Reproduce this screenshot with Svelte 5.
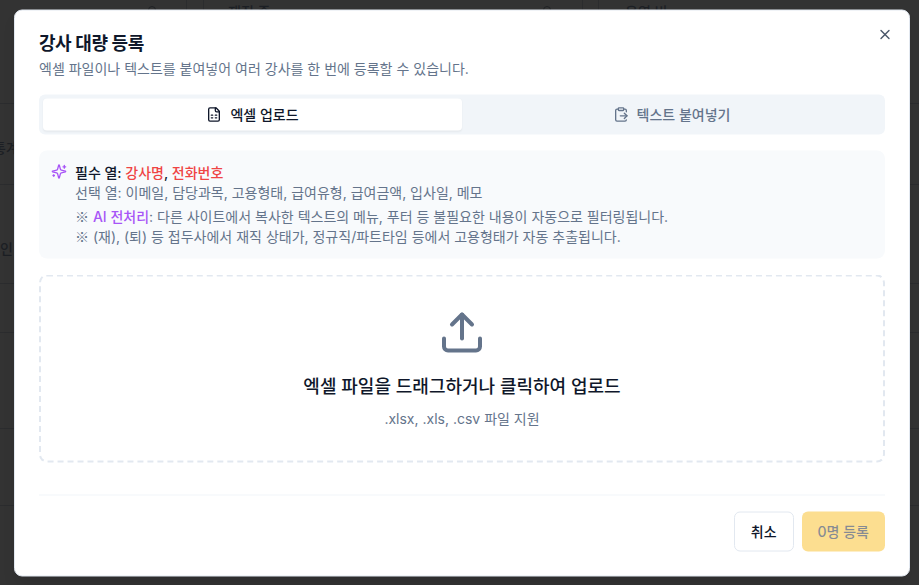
<script>
  const rowsLeft = [103, 184, 283, 332, 428, 505];
</script>

<div class="page">
  <div class="bg">
    <span class="bg-text t1">재직 중</span>
    <span class="bg-text t2">운영 비</span>
    <span class="bg-text t3">통계</span>
    <span class="bg-text t4">인</span>
    <i class="dot d1"></i><i class="dot d2"></i>
    <i class="v v1"></i><i class="v v2"></i><i class="v v3"></i><i class="v v4"></i>
    {#each rowsLeft as y}
      <i class="h" style="top:{y}px"></i>
    {/each}
  </div>

  <div class="modal" role="dialog">
    <button class="close" aria-label="닫기">
      <svg width="16" height="16" viewBox="0 0 24 24" fill="none" stroke="currentColor" stroke-width="2" stroke-linecap="round" stroke-linejoin="round"><path d="M18 6 6 18"/><path d="m6 6 12 12"/></svg>
    </button>

    <header class="head">
      <h2>강사 대량 등록</h2>
      <p>엑셀 파일이나 텍스트를 붙여넣어 여러 강사를 한 번에 등록할 수 있습니다.</p>
    </header>

    <div class="tabs">
      <button class="tab active">
        <svg width="16" height="16" viewBox="0 0 24 24" fill="none" stroke="currentColor" stroke-width="2" stroke-linecap="round" stroke-linejoin="round"><path d="M15 2H6a2 2 0 0 0-2 2v16a2 2 0 0 0 2 2h12a2 2 0 0 0 2-2V7Z"/><path d="M14 2v4a2 2 0 0 0 2 2h4"/><path d="M8 13h2"/><path d="M14 13h2"/><path d="M8 17h2"/><path d="M14 17h2"/></svg>
        엑셀 업로드
      </button>
      <button class="tab">
        <svg width="16" height="16" viewBox="0 0 24 24" fill="none" stroke="currentColor" stroke-width="2" stroke-linecap="round" stroke-linejoin="round"><path d="M15 2H9a1 1 0 0 0-1 1v2c0 .6.4 1 1 1h6c.6 0 1-.4 1-1V3c0-.6-.4-1-1-1Z"/><path d="M8 4H6a2 2 0 0 0-2 2v14a2 2 0 0 0 2 2h12a2 2 0 0 0 2-2M16 4h2a2 2 0 0 1 2 2v2M11 14h10"/><path d="m17 10 4 4-4 4"/></svg>
        텍스트 붙여넣기
      </button>
    </div>

    <div class="info">
      <svg class="spark" width="16" height="16" viewBox="0 0 24 24" fill="none" stroke="currentColor" stroke-width="2" stroke-linecap="round" stroke-linejoin="round"><path d="M9.937 15.5A2 2 0 0 0 8.5 14.063l-6.135-1.582a.5.5 0 0 1 0-.962L8.5 9.936A2 2 0 0 0 9.937 8.5l1.582-6.135a.5.5 0 0 1 .963 0L14.063 8.5A2 2 0 0 0 15.5 9.937l6.135 1.581a.5.5 0 0 1 0 .964L15.5 14.063a2 2 0 0 0-1.437 1.437l-1.582 6.135a.5.5 0 0 1-.963 0z"/><path d="M20 3v4"/><path d="M22 5h-4"/><path d="M4 17v2"/><path d="M5 18H3"/></svg>
      <div class="info-body">
        <p class="req">필수 열: <span class="red">강사명</span>, <span class="red">전화번호</span></p>
        <p class="muted">선택 열: 이메일, 담당과목, 고용형태, 급여유형, 급여금액, 입사일, 메모</p>
        <div class="notes">
          <p><span class="mark">※</span> <strong>AI 전처리</strong>: 다른 사이트에서 복사한 텍스트의 메뉴, 푸터 등 불필요한 내용이 자동으로 필터링됩니다.</p>
          <p><span class="mark">※</span> (재), (퇴) 등 접두사에서 재직 상태가, 정규직/파트타임 등에서 고용형태가 자동 추출됩니다.</p>
        </div>
      </div>
    </div>

    <div class="drop">
      <svg class="up" width="48" height="48" viewBox="0 0 24 24" fill="none" stroke="currentColor" stroke-width="2" stroke-linecap="round" stroke-linejoin="round"><path d="M21 15v4a2 2 0 0 1-2 2H5a2 2 0 0 1-2-2v-4"/><polyline points="17 8 12 3 7 8"/><line x1="12" x2="12" y1="3" y2="15"/></svg>
      <p class="drop-title">엑셀 파일을 드래그하거나 클릭하여 업로드</p>
      <p class="drop-sub">.xlsx, .xls, .csv 파일 지원</p>
    </div>

    <footer class="foot">
      <button class="btn cancel">취소</button>
      <button class="btn submit" disabled>0명 등록</button>
    </footer>
  </div>
</div>

<style>
  :global(body) {
    margin: 0;
    background: #333333;
    font-family: Inter, "Noto Sans CJK KR", sans-serif;
  }
  * { box-sizing: border-box; }
  p, h2 { margin: 0; }

  .page {
    position: relative;
    width: 919px;
    height: 585px;
    overflow: hidden;
    background: #333333;
  }
  .bg { position: absolute; inset: 0; }
  .bg-text { position: absolute; color: #1c1f24; font-size: 14px; line-height: 20px; white-space: nowrap; font-weight: 500; }
  .t1 { left: 228px; top: 2px; }
  .t2 { left: 625px; top: 2px; }
  .t3 { left: -7px; top: 138px; }
  .t4 { left: 0; top: 239px; }
  .dot { position: absolute; top: 6px; width: 8px; height: 8px; border: 1px solid #1f2124; border-radius: 50%; }
  .d1 { left: 148px; } .d2 { left: 543px; }
  .v, .h { position: absolute; background: #2b2c2e; }
  .v { top: 0; height: 10px; width: 1px; }
  .v1 { left: 186px; } .v2 { left: 203px; } .v3 { left: 582px; } .v4 { left: 598px; }
  .h { left: 0; right: 0; height: 1px; }

  .modal {
    position: absolute;
    left: 14px;
    top: 10px;
    width: 896px;
    height: 566.5px;
    transform: translateY(-0.5px);
    background: #fff;
    border: 1px solid #e2e8f0;
    border-radius: 8px;
    padding: 24px;
    display: flex;
    flex-direction: column;
    box-shadow: 0 10px 15px -3px rgba(0,0,0,.1);
  }
  .close {
    position: absolute;
    right: 16px;
    top: 16px;
    padding: 0;
    width: 16px;
    height: 16px;
    border: 0;
    background: none;
    color: #475569;
    display: flex;
  }
  .head { display: flex; flex-direction: column; gap: 6px; margin-bottom: 16px; }
  h2 { font-size: 18px; line-height: 18px; font-weight: 600; color: #0f172a; letter-spacing: -.45px; }
  .head p { font-size: 14px; line-height: 20px; color: #64748b; }

  .tabs {
    display: grid;
    grid-template-columns: 1fr 1fr;
    height: 40px;
    padding: 4px;
    background: #f1f5f9;
    border-radius: 6px;
    margin-bottom: 16px;
  }
  .tab {
    display: flex;
    align-items: center;
    justify-content: center;
    gap: 8px;
    border: 0;
    background: none;
    border-radius: 4px;
    font: 500 14px/20px Inter, "Noto Sans CJK KR", sans-serif;
    color: #64748b;
  }
  .tab.active {
    background: #fff;
    color: #0f172a;
    box-shadow: 0 1px 2px rgba(0,0,0,.05);
  }

  .info {
    display: flex;
    gap: 8px;
    padding: 12px;
    background: #f8fafc;
    border-radius: 8px;
    font-size: 14px;
    line-height: 20px;
    color: #64748b;
    margin-bottom: 16px;
  }
  .spark { color: #a855f7; flex: none; margin-top: 1px; }
  .req { color: #0f172a; font-weight: 500; }
  .red { color: #ef4444; }
  .notes { margin-top: 4px; }
  .mark { font-family: "Noto Sans CJK KR", sans-serif; line-height: 1; }
  strong { color: #a855f7; font-weight: 500; }

  .drop {
    display: flex;
    flex-direction: column;
    align-items: center;
    height: 188px;
    padding-top: 32px;
    border: 2px dashed #e2e8f0;
    border-radius: 8px;
  }
  .up { color: #64748b; margin-bottom: 16px; }
  .drop-title { font-size: 18px; line-height: 28px; font-weight: 500; color: #0f172a; margin-bottom: 8px; }
  .drop-sub { font-size: 14px; line-height: 20px; color: #64748b; }

  .foot {
    margin-top: 32px;
    padding-top: 16px;
    border-top: 1px solid #f1f5f9;
    display: flex;
    justify-content: flex-end;
    gap: 8px;
  }
  .btn {
    height: 40px;
    padding: 0 16px;
    border-radius: 6px;
    font: 500 14px/20px Inter, "Noto Sans CJK KR", sans-serif;
  }
  .cancel { background: #fff; border: 1px solid #e2e8f0; color: #0f172a; }
  .submit { background: #fbbf24; border: 0; color: #0f172a; opacity: .5; }
</style>
